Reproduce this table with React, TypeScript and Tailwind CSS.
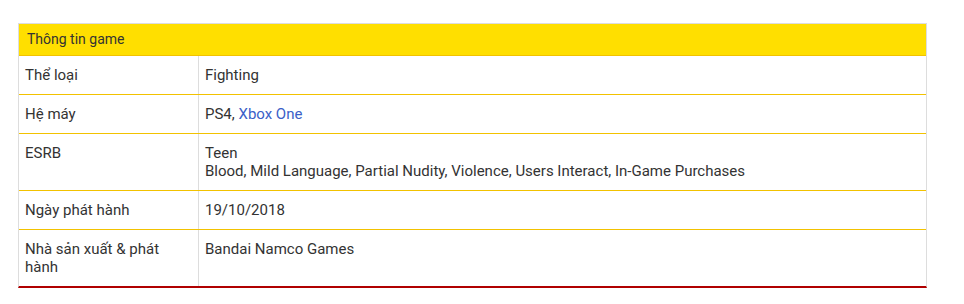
import React from "react";

type Row = { label: string; value: React.ReactNode; };

const rows: Row[] = [
  { label: "Thể loại", value: "Fighting" },
  {
    label: "Hệ máy",
    value: (
      <>
        PS4, <a href="#" className="text-[#3b5fc8]">Xbox One</a>
      </>
    ),
  },
  {
    label: "ESRB",
    value: (
      <>
        Teen
        <br />
        Blood, Mild Language, Partial Nudity, Violence, Users Interact, In-Game Purchases
      </>
    ),
  },
  { label: "Ngày phát hành", value: "19/10/2018" },
  { label: "Nhà sản xuất & phát hành", value: "Bandai Namco Games" },
];

export default function App() {
  return (
    <div className="w-[964px] h-[304px] bg-white pt-[23px] pl-[18px] font-['Roboto',sans-serif] text-[#333] text-[15px] leading-[18px]">
      <div className="w-[909px] border border-[#ddd] border-b-2 border-b-[#b00000]">
        <div className="h-[32px] bg-[#ffdf00] border-b border-[#f2c200] px-[8px] pt-[6px] text-[14px] leading-[19px]">
          Thông tin game
        </div>
        {rows.map((r, i) => (
          <div
            key={r.label}
            className={`flex ${i < rows.length - 1 ? "border-b border-[#f2c200]" : ""}`}
          >
            <div className="w-[180px] shrink-0 border-r border-[#ddd] pl-[6px] pr-[8px] pt-[10px] pb-[10px]">
              {r.label}
            </div>
            <div className="flex-1 pl-[6px] pt-[10px] pb-[10px]">{r.value}</div>
          </div>
        ))}
      </div>
    </div>
  );
}
